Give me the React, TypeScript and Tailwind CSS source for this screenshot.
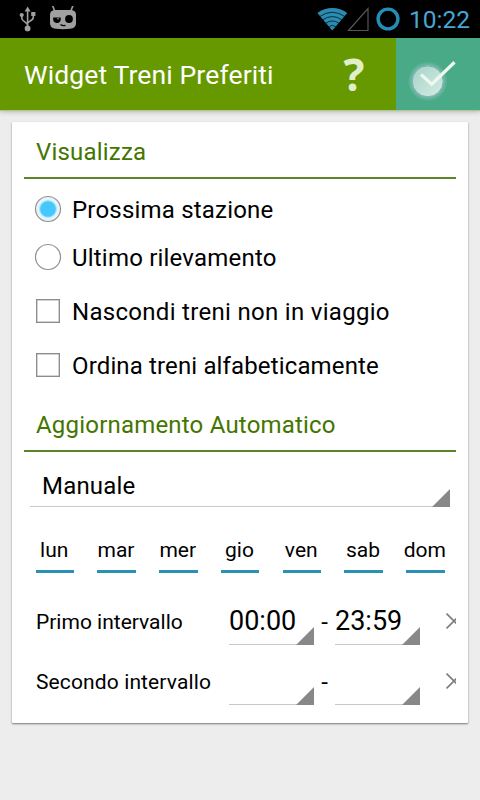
import React from "react";

function UsbIcon() {
  return (
    <svg width="18" height="26" viewBox="0 0 18 26" className="shrink-0" fill="none" stroke="#a0a0a0" strokeWidth="1.6">
      <path d="M8.6 4v18M2.8 9v3.2c0 3.5 5.8 3.8 5.8 7M14.3 8v3.6c0 3.5-5.7 3.2-5.7 6" />
      <path d="M8.6 .5l3 5h-6z" fill="#a0a0a0" stroke="none" />
      <circle cx="8.6" cy="22.4" r="2.9" fill="#a0a0a0" stroke="none" />
      <circle cx="2.7" cy="9" r="2.1" fill="#a0a0a0" stroke="none" />
      <path d="M12.2 6h4.2v4h-4.2z" fill="#a0a0a0" stroke="none" />
    </svg>
  );
}

function CidIcon() {
  return (
    <svg width="28" height="26" viewBox="0 0 28 26" className="shrink-0">
      <path d="M3.5 -.5L5.7 5M24 -.5L21.8 5" stroke="#a0a0a0" strokeWidth="1.6" strokeLinecap="round" />
      <path d="M1 9c0-3.5 2-4.8 6-4.9 5-.3 9-.3 14 0 4 .1 6 1.4 6 4.9v7.800c0 4-2 5.600-6 6q-7 .7-14 0c-4-.4-6-2-6-6z" fill="#a0a0a0" />
      <path d="M4.200 11.500h7.500v2.500a3.800 3.800 0 0 1-7.500-1z" fill="#000" />
      <circle cx="20" cy="13" r="3.900" fill="#000" />
      <circle cx="9" cy="12.700" r="0.900" fill="#808080" />
      <path d="M11.500 18.500q2 1.500 5 .9" stroke="#000" strokeWidth="1.200" fill="none" />
    </svg>
  );
}

function WifiIcon() {
  return (
    <svg width="31" height="24" viewBox="0 0 31 24" className="shrink-0">
      <path d="M15.300 23.500L.4 6C9-.8 21.600-.8 30.200 6z" fill="#2b8cb2" />
      <g fill="none" stroke="#06222f" strokeWidth="0.900">
        <path d="M2.800 9.500Q15.300 1 27.800 9.500" />
        <path d="M5.600 12.900Q15.300 6.200 25 12.900" />
        <path d="M8.600 16.400Q15.300 11.500 22 16.400" />
        <path d="M11.500 19.800Q15.300 16.800 19.100 19.800" />
      </g>
    </svg>
  );
}

function StatusBar() {
  return (
    <div className="flex h-[38px] items-center bg-black pr-[9px] pl-[19px]">
      <UsbIcon />
      <div className="w-[12px]" />
      <CidIcon />
      <div className="flex-1" />
      <WifiIcon />
      <svg width="23" height="25" viewBox="0 0 23 25" className="-ml-px shrink-0">
        <path d="M21 1.500v22H1.500z" fill="none" stroke="#555" strokeWidth="1.200" />
      </svg>
      <svg width="24" height="24" viewBox="0 0 24 24" className="ml-[6px] shrink-0">
        <circle cx="12" cy="12" r="9.900" fill="none" stroke="#258eb7" strokeWidth="3.400" />
      </svg>
      <span className="ml-[9px] w-[62px] pt-[2px] text-[24.500px] leading-[36px] text-[#45a7d3]">10:22</span>
    </div>
  );
}

function ActionBar() {
  return (
    <div className="flex h-[72px] bg-[#669900] shadow-[0_1px_1px_#b3c497,0_2px_5px_rgba(0,0,0,0.22)]">
      <h1 className="flex-1 pl-[24px] text-[26.5px] leading-[74px] font-normal tracking-[0.13px] whitespace-nowrap text-white">Widget Treni Preferiti</h1>
      <button className="w-[84px] font-['Open_Sans',sans-serif] text-[44px] leading-[69px] font-bold text-[#e0efca]">?</button>
      <button className="w-[84px] bg-[#49aa87]">
        <svg width="84" height="72" viewBox="0 0 84 72">
          <defs>
            <radialGradient id="touch-glow">
              <stop offset="0.75" stopColor="#a5d3d2" stopOpacity="0.5" />
              <stop offset="1" stopColor="#a5d3d2" stopOpacity="0" />
            </radialGradient>
            <linearGradient id="touch-fill" x1="0" y1="0" x2="1" y2="1">
              <stop offset="0" stopColor="#a6d3c6" />
              <stop offset="1" stopColor="#d5ece4" />
            </linearGradient>
          </defs>
          <circle cx="31.700" cy="43.300" r="20" fill="url(#touch-glow)" />
          <circle cx="31.700" cy="43.300" r="15.500" fill="url(#touch-fill)" stroke="#7fa9b6" strokeWidth="1" />
          <path d="M25 36.500L35.700 46.200L58.500 24.300" fill="none" stroke="#edf8ef" strokeWidth="3.300" />
        </svg>
      </button>
    </div>
  );
}

function Header({ children, className }: { children: React.ReactNode; className: string }) {
  return (
    <h2 className={`border-b-2 border-[#5c8527] pl-[12px] text-[24px] leading-[30px] font-normal tracking-[0.2px] text-[#447500] ${className}`}>{children}</h2>
  );
}

function Radio({ label, checked }: { label: string; checked?: boolean }) {
  return (
    <div className="flex h-[48px] items-center pl-[10px]">
      <svg width="28" height="28" viewBox="0 0 28 28">
        <circle cx="14" cy="14" r="12.500" fill={checked ? "#e4f5fd" : "#fff"} stroke="#929292" strokeWidth="1.200" />
        {checked && <circle cx="14" cy="14" r="9" fill="#a8e2fa" />}
        {checked && <circle cx="14" cy="14" r="7.800" fill="#45c8fb" />}
      </svg>
      <span className="ml-[10px] pt-[2px] text-[24px] leading-[48px] tracking-[0.2px] whitespace-nowrap">{label}</span>
    </div>
  );
}

function Check({ label, className }: { label: string; className: string }) {
  return (
    <div className="flex h-[54px] items-center pl-[12px]">
      <div className="size-[24px] border border-[#8c8c8c] shadow-[inset_0_0_0_0.5px_#aaa]" />
      <span className={`ml-[12px] pt-[2px] text-[24px] leading-[54px] whitespace-nowrap ${className}`}>{label}</span>
    </div>
  );
}

function Corner() {
  return (
    <svg width="18" height="18" viewBox="0 0 18 18" className="mb-[-1px] shrink-0 self-end">
      <path d="M18 0v18H0z" fill="#888" />
    </svg>
  );
}

function TimeBox({ value }: { value: string }) {
  return (
    <div className="relative flex h-[48px] w-[85px] justify-end border-b border-[#c9c9c9]">
      <span className="absolute top-px left-0 text-[27px] leading-[47px]">{value}</span>
      <Corner />
    </div>
  );
}

function Interval({ label, from, to, className }: { label: string; from: string; to: string; className: string }) {
  return (
    <div className="flex h-[60px] items-start pl-[12px]">
      <span className={`w-[193px] text-[21px] leading-[50px] whitespace-nowrap ${className}`}>{label}</span>
      <TimeBox value={from} />
      <span className="w-[21px] pt-px text-center text-[24px] leading-[48px]">-</span>
      <TimeBox value={to} />
      <svg width="10" height="18" viewBox="0 0 10 18" className="mt-[15px] ml-[26px]">
        <path d="M.5 1.500L16 17M.5 16.500L16 1" stroke="#7d7d7d" strokeWidth="1.700" />
      </svg>
    </div>
  );
}

const days = ["lun", "mar", "mer", "gio", "ven", "sab", "dom"];

export default function App() {
  return (
    <div className="h-[800px] w-[480px] overflow-hidden bg-[#ededed] font-[Roboto,sans-serif] text-black">
      <StatusBar />
      <ActionBar />
      <main className="mx-[12px] mt-[12px] h-[601px] rounded-[1px] bg-white px-[12px] shadow-[0_1px_2px_rgba(0,0,0,0.5)]">
        <Header className="h-[57px] pt-[15px]">Visualizza</Header>
        <div className="pt-[6px]">
          <Radio label="Prossima stazione" checked />
          <Radio label="Ultimo rilevamento" />
        </div>
        <div className="pt-[3px]">
          <Check label="Nascondi treni non in viaggio" className="tracking-[0.3px]" />
          <Check label="Ordina treni alfabeticamente" className="tracking-[0.14px]" />
        </div>
        <Header className="mt-[4px] h-[56px] pt-[14px]">Aggiornamento Automatico</Header>
        <div className="mx-[6px] flex h-[55px] justify-between border-b border-[#c9c9c9] pl-[12px]">
          <span className="pt-[7px] text-[24px] leading-[54px] tracking-[0.2px]">Manuale</span>
          <Corner />
        </div>
        <div className="mt-[28px] mr-[11.5px] ml-[11.5px] flex justify-between">
          {days.map((day) => (
            <div key={day} className="flex h-[38px] w-[38.5px] justify-center border-b-[3px] border-[#2b91b2]">
              <span className="-ml-px text-[21px] leading-[30px]">{day}</span>
            </div>
          ))}
        </div>
        <div className="pt-[24px]">
          <Interval label="Primo intervallo" from="00:00" to="23:59" className="" />
          <Interval label="Secondo intervallo" from="" to="" className="tracking-[0.12px]" />
        </div>
      </main>
    </div>
  );
}
